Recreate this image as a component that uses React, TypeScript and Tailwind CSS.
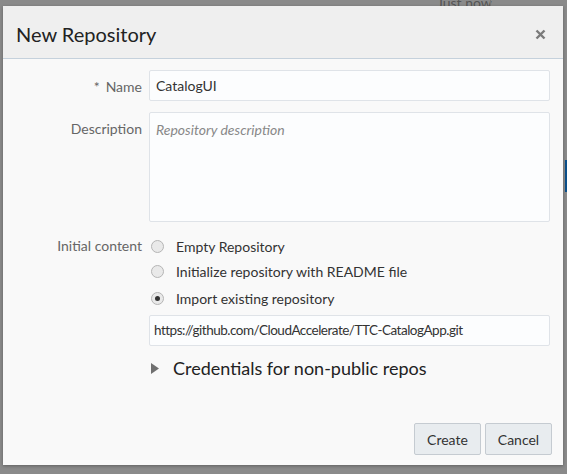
import React from "react";

function Radio({ checked }: { checked?: boolean }) {
  return (
    <span className="w-[13px] h-[13px] rounded-full border border-[#b5b5b5] bg-[#e9e9e9] flex items-center justify-center shrink-0">
      {checked && <span className="w-[5px] h-[5px] rounded-full bg-[#333]" />}
    </span>
  );
}

export default function App() {
  const font = { fontFamily: 'Lato, "Open Sans", sans-serif' };
  return (
    <div className="relative w-[567px] h-[474px] bg-[#8a8a8a] overflow-hidden" style={font}>
      <div className="absolute left-[437px] top-[-8px] text-[14px] text-[#555]">Just now</div>
      <div className="absolute left-[490px] top-0 w-px h-[10px] bg-[#777]" />
      <div className="absolute left-[565px] top-[160px] w-[2px] h-[32px] bg-[#0a4f8a]" />
      <div className="absolute left-[3px] top-[6px] w-[560px] h-[459px] bg-[#f9f9f9] flex flex-col shadow-[0_1px_3px_rgba(0,0,0,0.3)]">
        <div className="h-[53px] bg-[#efefef] border-b border-[#c5d1dc] flex items-center justify-between pl-[13px] pr-[17px] shrink-0">
          <div className="text-[20px] text-[#222] leading-none pt-[3px]">New Repository</div>
          <svg width="11" height="11" viewBox="0 0 11 11" className="mt-[4px]">
            <path d="M1.5 1.5 L9.5 9.5 M9.5 1.5 L1.5 9.5" stroke="#7a7a7a" strokeWidth="2.4" />
          </svg>
        </div>
        <div className="flex-1 flex flex-col pt-[11px] pr-[13px]">
          <div className="grid grid-cols-[139px_1fr] gap-x-[7px] gap-y-[11px] text-[14px]">
            <div className="text-right text-[#666] pt-[6px]">
              <span className="mr-[6px]">*</span>Name
            </div>
            <div className="h-[31px] border border-[#dfe3e8] rounded-[2px] bg-[#fcfdfe] flex items-center px-[6px] text-[#333]">
              CatalogUI
            </div>
            <div className="text-right text-[#666] pt-[6px]">Description</div>
            <div className="h-[110px] border border-[#dfe3e8] rounded-[2px] bg-[#fcfdfe] px-[6px] pt-[6px] text-[#888] italic">
              Repository description
            </div>
            <div className="text-right text-[#666] pt-[2px]">Initial content</div>
            <div className="flex flex-col pt-[1px]">
              <div className="flex items-center gap-[12px] pl-[2px] h-[25px]">
                <Radio />
                <span className="text-[#333]">Empty Repository</span>
              </div>
              <div className="flex items-center gap-[12px] pl-[2px] h-[25px]">
                <Radio />
                <span className="text-[#333]">Initialize repository with README file</span>
              </div>
              <div className="flex items-center gap-[12px] pl-[2px] h-[28px]">
                <Radio checked />
                <span className="text-[#333]">Import existing repository</span>
              </div>
              <div className="mt-[3px] h-[31px] border border-[#dfe3e8] rounded-[2px] bg-[#fcfdfe] flex items-center px-[4px] text-[13.5px] tracking-[-0.5px] text-[#333]">
                https://github.com/CloudAccelerate/TTC-CatalogApp.git
              </div>
              <div className="flex items-center mt-[9px] h-[26px] pl-[2px]">
                <svg width="8" height="11" viewBox="0 0 8 11" className="mr-[14px]">
                  <path d="M0 0 L8 5.5 L0 11 Z" fill="#707070" />
                </svg>
                <span className="text-[18px] text-[#222]">Credentials for non-public repos</span>
              </div>
            </div>
          </div>
          <div className="flex-1" />
          <div className="flex justify-end gap-[4px] pb-[10px] mr-[-2px]">
            <button className="w-[67px] h-[32px] border border-[#c5cbd1] rounded-[2px] bg-[#e8ecef] text-[14px] text-[#333]">Create</button>
            <button className="w-[67px] h-[32px] border border-[#c5cbd1] rounded-[2px] bg-[#e8ecef] text-[14px] text-[#333]">Cancel</button>
          </div>
        </div>
      </div>
    </div>
  );
}
